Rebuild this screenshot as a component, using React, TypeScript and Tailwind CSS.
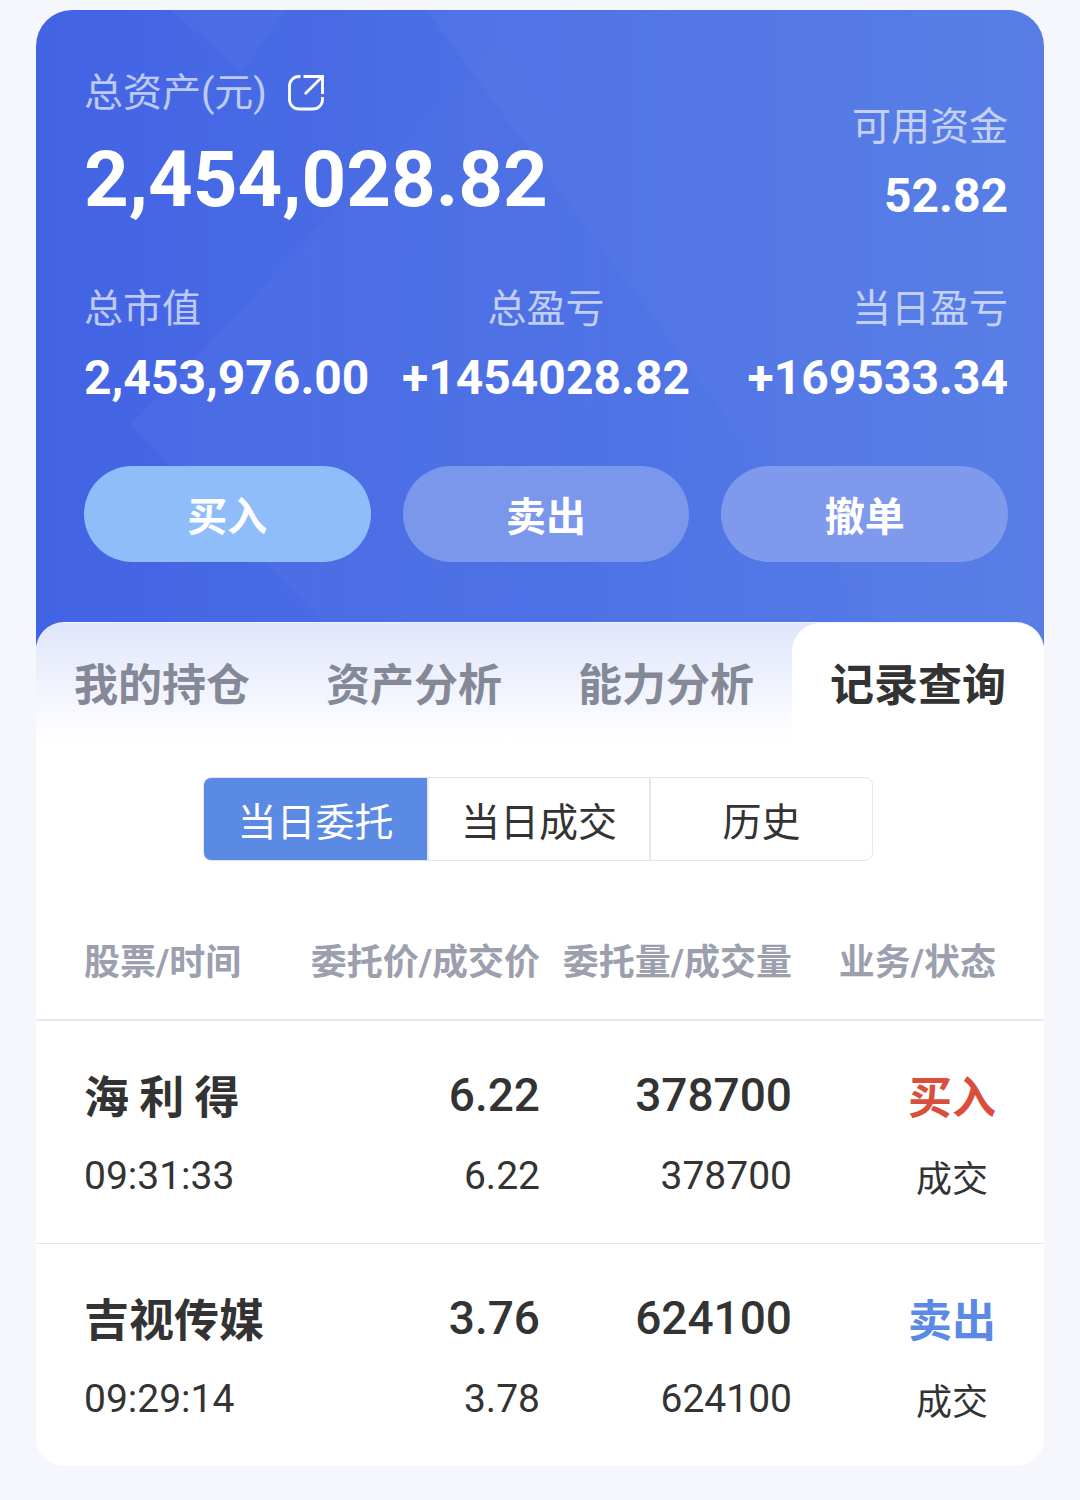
import React from 'react';

interface Order {
  name: string;
  time: string;
  price: string;
  dealPrice: string;
  amount: string;
  dealAmount: string;
  side: 'buy' | 'sell';
}

const orders: Order[] = [
  { name: '海 利 得', time: '09:31:33', price: '6.22', dealPrice: '6.22', amount: '378700', dealAmount: '378700', side: 'buy' },
  { name: '吉视传媒', time: '09:29:14', price: '3.76', dealPrice: '3.78', amount: '624100', dealAmount: '624100', side: 'sell' },
];

const tabs = ['我的持仓', '资产分析', '能力分析', '记录查询'];
const filters = ['当日委托', '当日成交', '历史'];

const ShareIcon = () => (
  <svg width="38" height="38" viewBox="-1 0 38 38" fill="none" stroke="white" strokeWidth="2.8">
    <path d="M12.5 2.5H11A9.5 9.5 0 0 0 1.5 12v13.5a9.5 9.5 0 0 0 9.5 9.5h14a9.5 9.5 0 0 0 9.5-9.5v-2.5" />
    <path d="M15.5 2.5h19V20M34.5 2.5L17 20" />
  </svg>
);

// faint diagonal light bands behind the summary
const Backdrop = () => (
  <svg className="absolute inset-0 h-full w-full" viewBox="0 0 1008 636" preserveAspectRatio="none" aria-hidden="true">
    <defs>
      <linearGradient id="band" x1="0" y1="0" x2="1" y2="0">
        <stop offset="0" stopColor="white" stopOpacity="0.03" />
        <stop offset="1" stopColor="white" stopOpacity="0" />
      </linearGradient>
    </defs>
    <path d="M135 0H250L205 62Z" fill="white" fillOpacity="0.03" />
    <path d="M390 0H1008V636H860Z" fill="url(#band)" />
    <path d="M95 415L300 200L460 40L620 230L460 636H310Z" fill="url(#band)" />
  </svg>
);

const Summary = () => (
  <header className="relative bg-linear-to-r from-[#4263e4] to-[#587ee6] text-white">
    <Backdrop />
    <div className="relative pt-14 pr-9 pb-[84px] pl-12">
      <div className="flex justify-between">
        <div>
          <div className="flex items-center gap-5">
            <span className="text-[39px] leading-[54px] text-white/65">总资产(元)</span>
            <a href="#share" aria-label="分享"><ShareIcon /></a>
          </div>
          <p className="text-[78px] leading-[120px] font-bold">2,454,028.82</p>
        </div>
        <div className="pt-8 text-right">
          <p className="text-[39px] leading-[58px] text-white/65">可用资金</p>
          <p className="text-[48px] leading-[80px] font-bold">52.82</p>
        </div>
      </div>
      <dl className="mt-10 grid grid-cols-3 gap-8 leading-[58px]">
        <div>
          <dt className="text-[39px] text-white/65">总市值</dt>
          <dd className="text-[48px] leading-[80px] font-bold">2,453,976.00</dd>
        </div>
        <div className="flex flex-col items-center">
          <dt className="text-[39px] text-white/65">总盈亏</dt>
          <dd className="text-[48px] leading-[80px] font-bold">+1454028.82</dd>
        </div>
        <div className="text-right">
          <dt className="text-[39px] text-white/65">当日盈亏</dt>
          <dd className="text-[48px] leading-[80px] font-bold">+169533.34</dd>
        </div>
      </dl>
      <div className="mt-12 grid grid-cols-3 gap-8 font-['Noto_Sans_CJK_SC',sans-serif] text-[40px] font-bold">
        <button className="h-24 rounded-full bg-[#8fbdfa]">买入</button>
        <button className="h-24 rounded-full bg-[#7b97eb]">卖出</button>
        <button className="h-24 rounded-full bg-[#7f9aed]">撤单</button>
      </div>
    </div>
  </header>
);

const OrderRow = ({ order }: { order: Order }) => (
  <tr className="border-b border-[#e6e7ea] text-right text-[#333333] last:border-b-0">
    <td className="pt-8 pb-7 pl-12 text-left">
      <p className="font-['Noto_Sans_CJK_SC',sans-serif] text-[45px] leading-[84px] font-bold">{order.name}</p>
      <p className="text-[39px] leading-[78px]">{order.time}</p>
    </td>
    <td className="pt-8 pb-7">
      <p className="text-[46px] leading-[84px] font-medium">{order.price}</p>
      <p className="text-[39px] leading-[78px]">{order.dealPrice}</p>
    </td>
    <td className="pt-8 pb-7">
      <p className="text-[46px] leading-[84px] font-medium">{order.amount}</p>
      <p className="text-[39px] leading-[78px]">{order.dealAmount}</p>
    </td>
    <td className="pt-8 pr-12 pb-7 font-['Noto_Sans_CJK_SC',sans-serif]">
      <p className={`text-[44px] leading-[84px] font-bold ${order.side === 'buy' ? 'text-[#d94f3b]' : 'text-[#5b8ae4]'}`}>
        {order.side === 'buy' ? '买入' : '卖出'}
      </p>
      <p className="pr-2 text-[36px] leading-[78px]">成交</p>
    </td>
  </tr>
);

export default function App() {
  return (
    <div className="min-h-screen bg-[#f5f7fc] px-9 pt-[10px] pb-8 font-[Roboto,'Noto_Sans_CJK_SC',sans-serif]">
      <div className="overflow-hidden rounded-t-[36px] rounded-b-[28px] bg-white">
        <Summary />
        <nav className="relative -mt-6 grid grid-cols-4 rounded-t-[28px] border-t border-[#edf4ff] bg-linear-to-b from-[#e0e6fb] to-white font-['Noto_Sans_CJK_SC',sans-serif] text-[44px] font-bold text-[#858896]">
          {tabs.map((tab, i) => (
            <button key={tab} className={i === 3 ? 'h-[118px] rounded-t-[28px] bg-white text-[#333333]' : 'h-[118px]'}>{tab}</button>
          ))}
        </nav>
        <div className="pt-9 pr-1">
          <div className="mx-auto grid w-2/3 grid-cols-3 overflow-hidden rounded-lg border border-[#e6e7ee] font-['Noto_Sans_CJK_SC',sans-serif] text-[39px]">
            {filters.map((filter, i) => (
              <button key={filter} className={i === 0 ? 'h-[82px] bg-[#5b8ae4] text-white' : 'h-[82px] border-l-2 border-[#e6e7f0] text-[#333333]'}>{filter}</button>
            ))}
          </div>
        </div>
        <table className="mt-12 w-full table-fixed">
          <thead>
            <tr className="border-b-2 border-[#e8e9ef] text-right text-[36px] leading-[60px] font-bold whitespace-nowrap text-[#9c9fae]">
              <th className="pt-6 pb-[26px] pl-12 text-left">股票/时间</th>
              <th className="pt-6 pb-[26px]">委托价/成交价</th>
              <th className="pt-6 pb-[26px]">委托量/成交量</th>
              <th className="pt-6 pr-12 pb-[26px]">业务/状态</th>
            </tr>
          </thead>
          <tbody>
            {orders.map((order) => <OrderRow key={order.name} order={order} />)}
          </tbody>
        </table>
      </div>
    </div>
  );
}
